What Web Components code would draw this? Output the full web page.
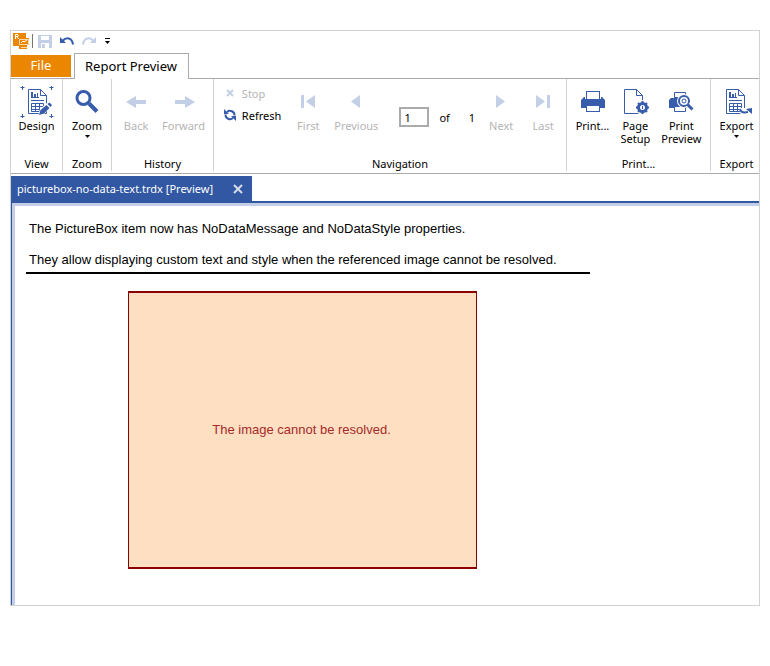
<!DOCTYPE html>
<html lang="en">
<head>
<meta charset="utf-8">
<title>Report Preview</title>
<style>
  body {
    margin: 0;
    padding: 30px 10px;
    background: #fff;
    color: #000;
    font: 11px/13px "Noto Sans", "Open Sans", sans-serif;
  }
  ribbon-group[name="View"] { --group-width: 51px; }
  ribbon-group[name="Zoom"] { --group-width: 48px; }
  ribbon-group[name="History"] { --group-width: 101px; }
  ribbon-group[name="Navigation"] { --group-width: 352px; --name-indent: 20px; }
  ribbon-group[name="Print..."] { --group-width: 143px; }
</style>
</head>
<body>
<app-window>
  <quick-access></quick-access>
  <ribbon-tabs>Report Preview</ribbon-tabs>
  <ribbon-bar>
    <ribbon-group name="View">
      <ribbon-button icon="design">Design</ribbon-button>
    </ribbon-group>
    <ribbon-group name="Zoom">
      <ribbon-button icon="zoom" menu>Zoom</ribbon-button>
    </ribbon-group>
    <ribbon-group name="History">
      <ribbon-button icon="back" disabled>Back</ribbon-button>
      <ribbon-button icon="forward" disabled>Forward</ribbon-button>
    </ribbon-group>
    <ribbon-group name="Navigation">
      <refresh-list></refresh-list>
      <ribbon-button icon="first" disabled>First</ribbon-button>
      <ribbon-button icon="previous" disabled>Previous</ribbon-button>
      <page-number value="1" total="1"></page-number>
      <ribbon-button icon="next" disabled>Next</ribbon-button>
      <ribbon-button icon="last" disabled>Last</ribbon-button>
    </ribbon-group>
    <ribbon-group name="Print...">
      <ribbon-button icon="print">Print...</ribbon-button>
      <ribbon-button icon="setup">Page<br>Setup</ribbon-button>
      <ribbon-button icon="preview">Print<br>Preview</ribbon-button>
    </ribbon-group>
    <ribbon-group name="Export" last>
      <ribbon-button icon="export" menu>Export</ribbon-button>
    </ribbon-group>
  </ribbon-bar>
  <document-tab>picturebox-no-data-text.trdx [Preview]</document-tab>
  <report-page>
    <p>The PictureBox item now has NoDataMessage and NoDataStyle properties.</p>
    <p>They allow displaying custom text and style when the referenced image cannot be resolved.</p>
    <picture-box slot="item">The image cannot be resolved.</picture-box>
  </report-page>
</app-window>

<script>
const BLUE = "#375cab";
const PALE = "#c3cee7";

const sheet = `
  <path d="M7.5 3.500H19.500L25.500 9.500V27.500H7.500Z" fill="#fff" stroke="${BLUE}"/>
  <path d="M19.500 3.500V9.500H25.500" fill="none" stroke="${BLUE}"/>
  <path d="M10 6h2v6h-2zM13 8h2v4h-2zM16 7h1v5h-1zM10 11h8v1H10zM10 14h13v1H10z" fill="${BLUE}"/>
  <path d="M10.500 17.500h12v8h-12zM10 20.500h13M10 23.500h13M14.500 17v9M18.500 17v9" fill="none" stroke="${BLUE}"/>`;

// all 32x32, drawn on whole pixels
const icons = {
  design: `${sheet}
    <path d="M1.500 0v4M-.5 1.500h4M30.500 0v4M28.500 1.500h4M1.500 28v4M-.5 30.500h4M30.500 28v4M28.500 30.500h4" stroke="${BLUE}" fill="none"/>
    <path d="M17 30l2-7 8-7 4 4-8 8z" fill="#fff"/>
    <path d="M18 29l1.500-5 6-5 3 3-5.500 5.500zM26.500 18l2-1.500 2.500 2.500-1.500 2z" fill="${BLUE}"/>`,
  zoom: `<circle cx="12.500" cy="12" r="6.500" fill="none" stroke="${BLUE}" stroke-width="3"/>
    <path d="M18 17.500l8 8" stroke="${BLUE}" stroke-width="4" fill="none"/>`,
  back: `<path d="M6 16l10-6v4h10v4H16v4z" fill="${PALE}"/>`,
  forward: `<path d="M27 16l-10-6v4H7v4h10v4z" fill="${PALE}"/>`,
  first: `<path d="M9 9h3v13H9zM23 9v13l-9-6.500z" fill="${PALE}"/>`,
  previous: `<path d="M20 9v13l-9-6.500z" fill="${PALE}"/>`,
  next: `<path d="M11 9v13l9-6.500z" fill="${PALE}"/>`,
  last: `<path d="M9 9v13l9-6.500zM20 9h3v13h-3z" fill="${PALE}"/>`,
  print: `<rect x="10.500" y="5.500" width="13" height="9" fill="#fff" stroke="${BLUE}"/>
    <path d="M5 14l3-3h1v2h16v-2h1l3 3v8H5z" fill="${BLUE}"/>
    <rect x="10.500" y="19.500" width="13" height="6" fill="#fff" stroke="${BLUE}"/>`,
  setup: `<path d="M5.500 3.500H17.500L23.500 9.500V27.500H5.500Z" fill="#fff" stroke="${BLUE}"/>
    <path d="M17.500 3.500V9.500H23.500" fill="none" stroke="${BLUE}"/>
    <circle cx="23.500" cy="21.500" r="7.500" fill="#fff"/>
    <circle cx="23.500" cy="21.500" r="4" fill="none" stroke="${BLUE}" stroke-width="3"/>
    <path d="M23.500 15v2M23.500 26v2M17 21.500h2M28 21.500h2M19 17l1.500 1.500M28 17l-1.500 1.500M19 26l1.500-1.500M28 26l-1.500-1.500" stroke="${BLUE}" stroke-width="2"/>
    <rect x="23" y="20" width="1" height="3" fill="${BLUE}"/>`,
  preview: `<path d="M4 14l2-2h3v-2h13v12H4z" fill="${BLUE}"/>
    <path d="M9.500 6.500h11v5h-11zM9.500 20.500h11v5h-11z" fill="#fff" stroke="${BLUE}"/>
    <circle cx="19" cy="15" r="7" fill="#fff"/>
    <circle cx="19" cy="15" r="5" fill="#fff" stroke="${BLUE}" stroke-width="2"/>
    <circle cx="19" cy="15" r="2" fill="none" stroke="${BLUE}"/>
    <path d="M22.500 19l5 5" stroke="#fff" stroke-width="5"/>
    <path d="M22.500 18.500l5 5" stroke="${BLUE}" stroke-width="3"/>`,
  export: `<g transform="translate(-2 0)">${sheet}</g>
    <path d="M18 22h7v3h6v5H20z" fill="#fff"/>
    <path d="M19 23c1 4 4 4 8 3" fill="none" stroke="${BLUE}" stroke-width="2"/>
    <path d="M25 23l6-1v6z" fill="${BLUE}"/>`
};

class AppWindow extends HTMLElement {
  constructor() {
    super();
    this.attachShadow({ mode: "open" });
    this.shadowRoot.innerHTML = `
      <style>
        :host {
          display: block;
          border: 1px solid #d2d2d2;
        }
      </style>
      <slot></slot>
    `;
  }
}
customElements.define("app-window", AppWindow);

class QuickAccess extends HTMLElement {
  constructor() {
    super();
    this.attachShadow({ mode: "open" });
    this.shadowRoot.innerHTML = `
      <style>
        :host {
          display: flex;
          align-items: center;
          height: 20px;
          padding: 0 0 2px 2px;
        }
        svg { display: block; }
        button {
          padding: 0;
          border: 0;
          background: none;
        }
        .line {
          width: 1px;
          height: 14px;
          margin: 0 5px 0 3px;
          background: #777;
        }
        .tools {
          display: flex;
          gap: 8px;
        }
      </style>
      <svg width="16" height="16">
        <path d="M0 0h13v5h3v7h-2v4H6v-3H0z" fill="#eb8600"/>
        <path d="M2.500 6V1.500H4q1.500 0 1.500 1T4 3.500H2.500M4 3.500L5.500 6" fill="none" stroke="#fff"/>
        <path d="M6.500 6.500h9v5h-9zM8 14.500h6" fill="none" stroke="#fbd9a6"/>
        <path d="M8 10l2-2 1 1 3-2" fill="none" stroke="#fff"/>
      </svg>
      <span class="line"></span>
      <div class="tools">
        <button aria-label="Save"><svg width="14" height="14">
          <path d="M0 1h14v13H0z" fill="${PALE}"/>
          <path d="M3 2h8v4H3zM3 9h8v5H3z" fill="#fff"/>
          <path d="M4 10h3v4H4z" fill="${PALE}"/>
        </svg></button>
        <button aria-label="Undo"><svg width="14" height="14">
          <path d="M2.500 7C6 3 12 3 13 10.500" fill="none" stroke="${BLUE}" stroke-width="2"/>
          <path d="M0 3v6h6z" fill="${BLUE}"/>
        </svg></button>
        <button aria-label="Redo"><svg width="14" height="14">
          <path d="M11.500 7C8 3 2 3 1 10.500" fill="none" stroke="${PALE}" stroke-width="2"/>
          <path d="M14 3v6H8z" fill="${PALE}"/>
        </svg></button>
        <button aria-label="Customize"><svg width="7" height="14">
          <path d="M1 4h5v1H1zM1 7h5L3.500 10z"/>
        </svg></button>
      </div>
    `;
  }
}
customElements.define("quick-access", QuickAccess);

class RibbonTabs extends HTMLElement {
  constructor() {
    super();
    this.attachShadow({ mode: "open" });
    this.shadowRoot.innerHTML = `
      <style>
        :host {
          display: flex;
          font-size: 13px;
        }
        button {
          box-sizing: border-box;
          border: 0;
          padding: 0;
          font: inherit;
        }
        .file {
          width: 60px;
          height: 22px;
          margin-top: 2px;
          padding-bottom: 1px;
          background: #eb8600;
          color: #fff;
        }
        .gap {
          width: 3px;
        }
        .current {
          height: 26px;
          padding: 0 11px 1px 10px;
          background: #fff;
          color: #000;
          border: 1px solid #ababab;
          border-bottom: 0;
        }
        .rest {
          flex: 1;
        }
        .under {
          border-bottom: 1px solid #ababab;
        }
      </style>
      <div class="under"><button class="file">File</button></div>
      <span class="gap under"></span>
      <button class="current"><slot></slot></button>
      <span class="rest under"></span>
    `;
  }
}
customElements.define("ribbon-tabs", RibbonTabs);

class RibbonBar extends HTMLElement {
  constructor() {
    super();
    this.attachShadow({ mode: "open" });
    this.shadowRoot.innerHTML = `
      <style>
        :host {
          display: flex;
          height: 94px;
          border-bottom: 1px solid #ababab;
        }
      </style>
      <slot></slot>
    `;
  }
}
customElements.define("ribbon-bar", RibbonBar);

class RibbonGroup extends HTMLElement {
  constructor() {
    super();
    this.attachShadow({ mode: "open" });
    this.shadowRoot.innerHTML = `
      <style>
        :host {
          display: flex;
          flex-direction: column;
          flex: 0 0 var(--group-width);
          margin-bottom: 2px;
          border-right: 1px solid #d2d2d2;
        }
        :host([last]) {
          flex: 0 0 51px;
          border-right: 0;
          margin-right: -3px;
        }
        .items {
          flex: 1;
          display: flex;
          justify-content: center;
          padding-top: 7px;
        }
        .name {
          padding: 0 0 1px var(--name-indent, 0);
          text-align: center;
        }
      </style>
      <div class="items"><slot></slot></div>
      <div class="name">${this.getAttribute("name")}</div>
    `;
  }
}
customElements.define("ribbon-group", RibbonGroup);

class RibbonButton extends HTMLElement {
  constructor() {
    super();
    this.attachShadow({ mode: "open" });
    const off = this.hasAttribute("disabled");
    const menu = this.hasAttribute("menu");
    this.shadowRoot.innerHTML = `
      <style>
        :host { display: block; }
        button {
          display: flex;
          flex-direction: column;
          align-items: center;
          min-width: 40px;
          padding: 0 5px;
          border: 0;
          background: none;
          color: #000;
          font: inherit;
        }
        button:disabled { color: #b4b4b4; }
        .icon {
          display: block;
          margin-bottom: 1px;
          overflow: visible;
        }
        .caret { margin-top: 3px; }
      </style>
      <button ${off ? "disabled" : ""}>
        <svg class="icon" width="32" height="32">${icons[this.getAttribute("icon")]}</svg>
        <span><slot></slot></span>
        ${menu ? '<svg class="caret" width="5" height="3"><path d="M0 0h5L2.500 3z"/></svg>' : ""}
      </button>
    `;
  }
}
customElements.define("ribbon-button", RibbonButton);

class RefreshList extends HTMLElement {
  constructor() {
    super();
    this.attachShadow({ mode: "open" });
    this.shadowRoot.innerHTML = `
      <style>
        :host {
          display: flex;
          flex-direction: column;
          gap: 8px;
          padding: 0 6px 0 8px;
        }
        button {
          display: flex;
          align-items: center;
          gap: 6px;
          height: 14px;
          padding: 0;
          border: 0;
          background: none;
          color: #000;
          font: inherit;
        }
        button:disabled { color: #b4b4b4; }
      </style>
      <button disabled>
        <svg width="12" height="12"><path d="M3 3l6 6M9 3l-6 6" stroke="${PALE}" stroke-width="2"/></svg>
        Stop
      </button>
      <button>
        <svg width="12" height="12">
          <path d="M3 3a4.500 4.500 0 0 1 7.500 3.500M9 9a4.500 4.500 0 0 1-7.500-3.500" fill="none" stroke="${BLUE}" stroke-width="2"/>
          <path d="M0 0l5 5H0zM12 12L7 7h5z" fill="${BLUE}"/>
        </svg>
        Refresh
      </button>
    `;
  }
}
customElements.define("refresh-list", RefreshList);

class PageNumber extends HTMLElement {
  constructor() {
    super();
    this.attachShadow({ mode: "open" });
    this.shadowRoot.innerHTML = `
      <style>
        :host {
          display: flex;
          align-items: center;
          align-self: flex-start;
          margin: 21px 5px 0 16px;
        }
        input {
          box-sizing: border-box;
          width: 30px;
          height: 20px;
          padding: 0 3px;
          border: 2px solid #ababab;
          font: inherit;
        }
        label {
          display: flex;
          align-items: center;
          gap: 10px;
        }
        .total { margin-left: 19px; }
      </style>
      <label><input value="${this.getAttribute("value")}"> of</label>
      <span class="total">${this.getAttribute("total")}</span>
    `;
  }
}
customElements.define("page-number", PageNumber);

class DocumentTab extends HTMLElement {
  constructor() {
    super();
    this.attachShadow({ mode: "open" });
    this.shadowRoot.innerHTML = `
      <style>
        :host {
          display: flex;
          margin-top: 2px;
          border-bottom: 2px solid #3257a3;
        }
        .tab {
          display: flex;
          align-items: center;
          gap: 20px;
          height: 25px;
          padding: 0 9px 0 6px;
          background: #3257a3;
          color: #fff;
        }
        button {
          padding: 0;
          border: 0;
          background: none;
        }
        svg { display: block; }
      </style>
      <div class="tab">
        <slot></slot>
        <button aria-label="Close"><svg width="10" height="10">
          <path d="M1 1l8 8M9 1L1 9" stroke="#d5dcec" stroke-width="2"/>
        </svg></button>
      </div>
    `;
  }
}
customElements.define("document-tab", DocumentTab);

class ReportPage extends HTMLElement {
  constructor() {
    super();
    this.attachShadow({ mode: "open" });
    this.shadowRoot.innerHTML = `
      <style>
        :host {
          display: block;
          border-left: 1px solid #3257a3;
          font: 13px/15px "Liberation Sans", Arial, sans-serif;
        }
        .page {
          padding: 15px 11px 36px;
          border-top: 3px solid #c3cee7;
          border-left: 3px solid #c3cee7;
        }
        .text {
          display: flex;
          flex-direction: column;
          gap: 16px;
          width: 561px;
          padding: 0 0 5px 3px;
          border-bottom: 2px solid #000;
        }
        ::slotted(p) {
          margin: 0;
          white-space: nowrap;
        }
      </style>
      <div class="page">
        <div class="text"><slot></slot></div>
        <slot name="item"></slot>
      </div>
    `;
  }
}
customElements.define("report-page", ReportPage);

class PictureBox extends HTMLElement {
  constructor() {
    super();
    this.attachShadow({ mode: "open" });
    this.shadowRoot.innerHTML = `
      <style>
        :host {
          display: flex;
          align-items: center;
          justify-content: center;
          width: 345px;
          height: 272px;
          margin: 17px 0 0 102px;
          padding: 0 2px 2px 0;
          border: solid #8b0000;
          border-width: 2px 1px;
          background: #ffdfc1;
          color: #a52a2a;
        }
      </style>
      <slot></slot>
    `;
  }
}
customElements.define("picture-box", PictureBox);
</script>
</body>
</html>
